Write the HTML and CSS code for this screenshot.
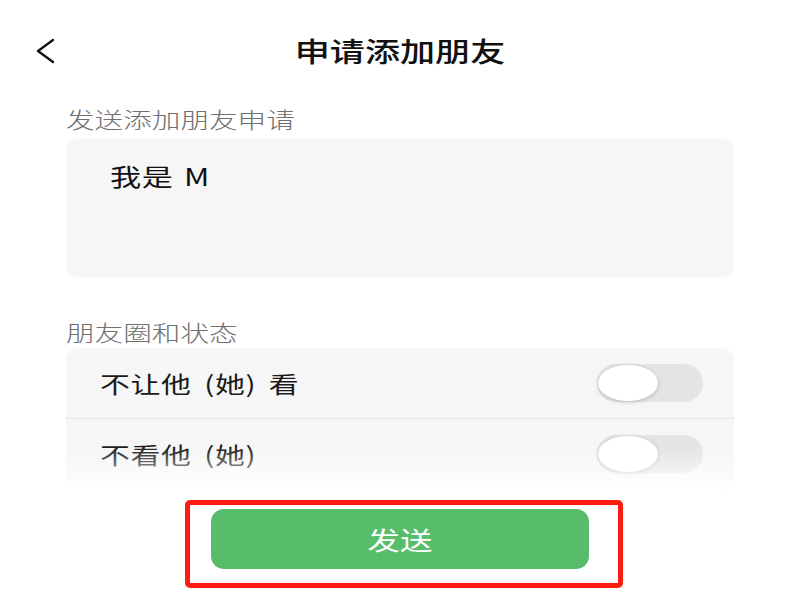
FILE: index.html
```html
<!DOCTYPE html>
<html lang="zh">
<head>
<meta charset="utf-8">
<link rel="stylesheet" href="styles.css">
</head>
<body>
<div class="page">
  <header class="topbar">
    <div class="back">
      <svg width="22" height="26" viewBox="0 0 22 26"><path d="M18 2 L3 13 L18 24" fill="none" stroke="#111" stroke-width="2.3" stroke-linecap="round" stroke-linejoin="round"/></svg>
    </div>
    <h1 class="title"><span class="wide">申请添加朋友</span></h1>
    <div></div>
  </header>

  <main class="content">
    <div class="label"><span class="wide-l">发送添加朋友申请</span></div>
    <div class="msgbox"><span class="wide-l msg">我是 M</span></div>

    <div class="label label2"><span class="wide-l">朋友圈和状态</span></div>
    <div class="card">
      <div class="row row-first">
        <span class="wide-l rowtext">不让他 (她) 看</span>
        <div class="toggle"><div class="knob"></div></div>
      </div>
      <div class="row">
        <span class="wide-l rowtext">不看他 (她)</span>
        <div class="toggle"><div class="knob"></div></div>
      </div>
    </div>

    <div class="highlight">
      <button class="send"><span class="wide">发送</span></button>
    </div>
  </main>
</div>
</body>
</html>
```
FILE: styles.css
```css
* { box-sizing: border-box; }
html, body { margin: 0; padding: 0; background: #fff; }
body {
  font-family: "Noto Sans CJK SC", "Noto Sans", sans-serif;
  color: #111;
}
.page {
  width: 800px;
  height: 600px;
  overflow: hidden;
  display: flex;
  flex-direction: column;
}
.page > *, .content > * { flex-shrink: 0; }
.topbar {
  height: 102px;
  display: grid;
  grid-template-columns: 1fr auto 1fr;
  align-items: center;
  padding: 0 35px;
}
.back { display: flex; align-items: center; height: 26px; }
.title {
  margin: 0;
  font-size: 27px;
  font-weight: 500;
  line-height: 36px;
  color: #111;
  width: 210px;
  text-align: center;
}
.wide { display: inline-block; transform: scaleX(1.3); transform-origin: center; }
.wide-l { display: inline-block; transform: scaleX(1.3); transform-origin: left center; white-space: nowrap; }
.content {
  display: flex;
  flex-direction: column;
  padding: 0 66px;
}
.label {
  margin-top: 2px;
  font-size: 22px;
  line-height: 28px;
  color: #707070;
  font-weight: 300;
}
.msgbox {
  margin-top: 7px;
  height: 138px;
  background: #f6f6f6;
  border-radius: 12px;
  padding: 21px 0 0 44px;
}
.msg { font-size: 24px; line-height: 32px; color: #111; word-spacing: 2px; letter-spacing: 0.5px; }
.label2 { margin-top: 40px; }
.card {
  position: relative;
  margin-top: 3px;
  background: #f6f6f6;
  border-radius: 12px;
  overflow: hidden;
}
.card::after {
  content: "";
  position: absolute;
  left: 0; right: 0; bottom: 0;
  height: 42px;
  background: linear-gradient(to bottom, rgba(255,255,255,0), rgba(255,255,255,0.92));
}
.row {
  height: 70px;
  display: flex;
  align-items: center;
  justify-content: space-between;
  padding: 0 31px 0 34px;
}
.row-first { border-bottom: 1px solid #e6e6e6; height: 71px; }
.rowtext { font-size: 23px; line-height: 30px; color: #1a1a1a; font-weight: 400; word-spacing: 4px; letter-spacing: 0.5px; }
.toggle {
  width: 106px;
  height: 38px;
  border-radius: 19px;
  background: #e4e4e4;
  position: relative;
}
.knob {
  position: absolute;
  left: 1px; top: 1px;
  width: 60px; height: 36px;
  border-radius: 50%;
  background: #fff;
  box-shadow: 0 1px 4px rgba(0,0,0,0.2);
}
.highlight {
  margin-top: 11px;
  margin-left: 119px;
  width: 438px;
  height: 88px;
  border: 5px solid #ff1a12;
  border-radius: 5px;
  padding: 4px 0 0 21px;
}
.send {
  width: 378px;
  height: 60px;
  border: none;
  border-radius: 13px;
  background: #57bd6a;
  color: #fff;
  font-family: inherit;
  font-size: 25px;
  padding: 0;
}
```
